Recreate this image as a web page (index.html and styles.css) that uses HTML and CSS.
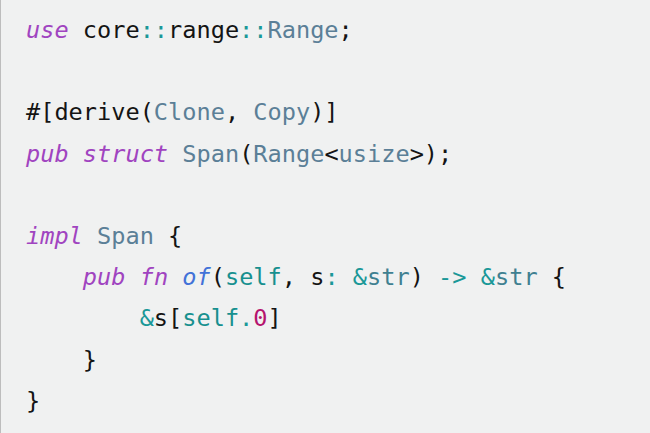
FILE: index.html
```html
<!DOCTYPE html>
<html>
<head>
<meta charset="utf-8">
<link rel="stylesheet" href="styles.css">
</head>
<body>
<pre class="code"><code><span class="kw">use</span> core<span class="op">::</span>range<span class="op">::</span><span class="ty">Range</span>;

#[derive(<span class="ty">Clone</span>, <span class="ty">Copy</span>)]
<span class="kw">pub</span> <span class="kw">struct</span> <span class="ty">Span</span>(<span class="ty">Range</span>&lt;<span class="ty">usize</span>&gt;);

<span class="kw">impl</span> <span class="ty">Span</span> {
    <span class="kw">pub</span> <span class="kw">fn</span> <span class="fn">of</span>(<span class="sf">self</span>, s<span class="op">:</span> <span class="op">&amp;</span><span class="pt">str</span>) <span class="op">-&gt;</span> <span class="op">&amp;</span><span class="pt">str</span> {
        <span class="op">&amp;</span>s[<span class="sf">self</span><span class="op">.</span><span class="num">0</span>]
    }
}</code></pre>
</body>
</html>
```
FILE: styles.css
```css
html, body {
  margin: 0;
  padding: 0;
  background: #f0f1f1;
}
.code {
  margin: 0;
  height: 433px;
  box-sizing: border-box;
  border-left: 1px solid #bdbdbd;
  background: #f0f1f1;
  padding: 10px 0 0 25px;
  font-family: "DejaVu Sans Mono", "Liberation Mono", monospace;
  font-size: 23.6px;
  line-height: 41.2px;
  color: #141414;
  white-space: pre;
}
.kw { color: #a044c0; font-style: italic; }
.op { color: #1a9898; }
.ty { color: #5b7f97; }
.pt { color: #3f8090; }
.fn { color: #4272d8; font-style: italic; }
.sf { color: #17908f; }
.num { color: #b5146e; }
```
